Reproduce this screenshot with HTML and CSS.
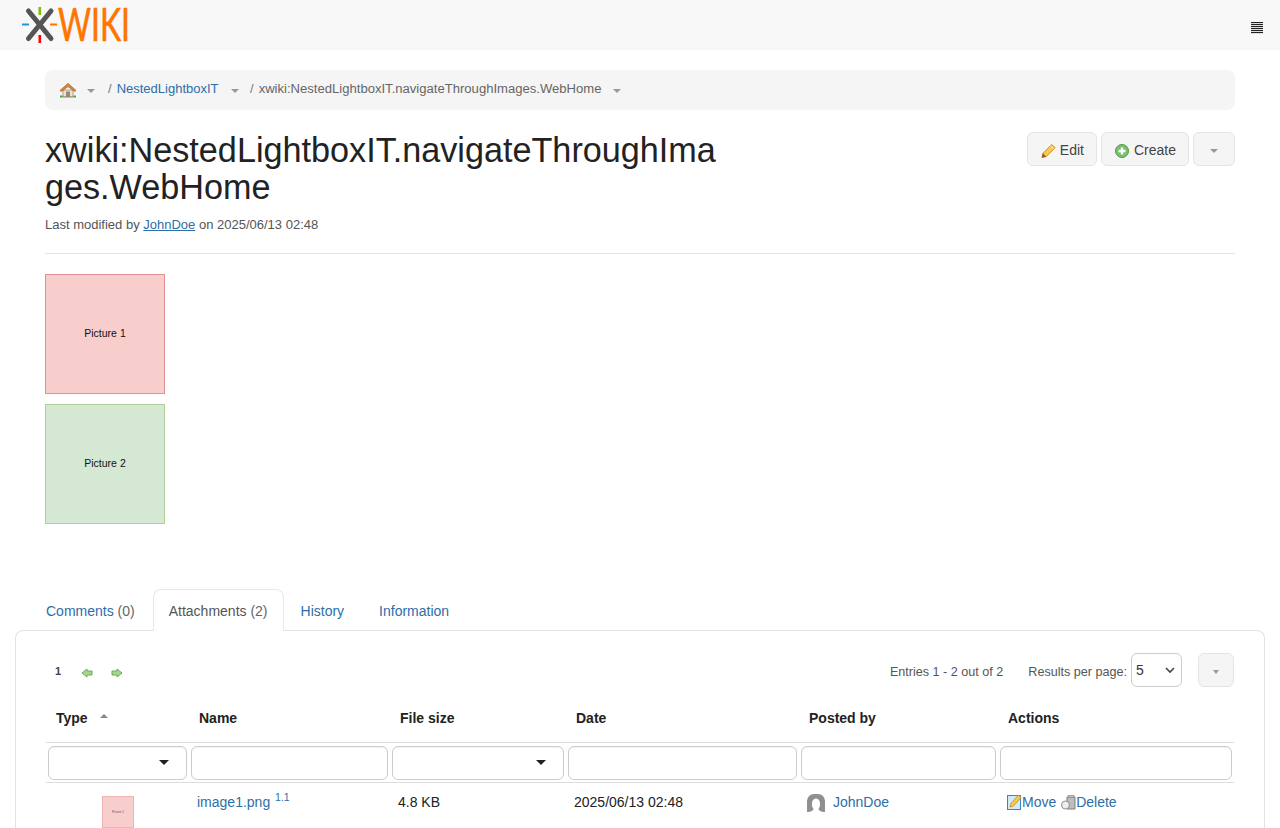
FILE: index.html
```html
<!DOCTYPE html>
<html lang="en">
<head>
<meta charset="utf-8">
<title>xwiki:NestedLightboxIT.navigateThroughImages.WebHome</title>
<link rel="stylesheet" href="styles.css">
</head>
<body>
<header class="topbar">
  <a class="logo" href="#" aria-label="XWiki">
    <svg width="150" height="50" viewBox="0 0 150 50">
      <g stroke="#555" stroke-width="5" stroke-linecap="round">
        <line x1="6.500" y1="11" x2="29" y2="38.500"/>
        <line x1="29" y1="11" x2="6.500" y2="38.500"/>
      </g>
      <line x1="17.800" y1="7" x2="17.800" y2="15" stroke="#84bd00" stroke-width="2.600"/>
      <line x1="17.800" y1="35" x2="17.800" y2="43" stroke="#f00" stroke-width="2.600"/>
      <line x1="0" y1="24.500" x2="7" y2="24.500" stroke="#1c9ad6" stroke-width="2"/>
      <line x1="28" y1="24.500" x2="35" y2="24.500" stroke="#ff7500" stroke-width="2"/>
      <text class="logo-text" x="36" y="41" textLength="72" lengthAdjust="spacingAndGlyphs">WIKI</text>
    </svg>
  </a>
  <button class="menu-toggle" type="button" aria-label="Menu"><span></span></button>
</header>

<main class="page">
  <nav class="breadcrumb">
    <span class="crumb crumb-home">
      <svg class="icon" width="16" height="15" viewBox="0 0 16 15">
        <path d="M0 13.500h16" stroke="#5aa53b" stroke-width="2"/>
        <path d="M3 7h10v6.500H3z" fill="#f1e2c4" stroke="#b5a27e"/>
        <path d="M6 8.500h4V14H6z" fill="#8c8c8c"/>
        <path d="M0 7.500 8 .5l8 7-1.500 .8L8 3.500 1.500 8.300z" fill="#d98a3d" stroke="#a9601f" stroke-width=".8"/>
      </svg>
      <span class="caret"></span>
    </span>
    <span class="crumb crumb-space"><span class="sep">/</span><a href="#">NestedLightboxIT</a><span class="caret"></span></span>
    <span class="crumb crumb-doc"><span class="sep">/</span><span class="current">xwiki:NestedLightboxIT.navigateThroughImages.WebHome</span><span class="caret"></span></span>
  </nav>

  <section class="doc-head">
    <div class="title-block">
      <h1>xwiki:NestedLightboxIT.navigateThroughImages.WebHome</h1>
      <p class="modified">Last modified by <a class="underlined" href="#">JohnDoe</a> on 2025/06/13 02:48</p>
    </div>
    <div class="actions">
      <a class="btn btn-edit" href="#">
        <svg class="icon" width="15" height="16" viewBox="0 0 16 16">
          <path d="M1 15l1-4.500L11.500 1 15 4.500 5.500 14z" fill="#f7c94f" stroke="#c98a1e"/>
          <path d="M1 15l1-4.500L5.500 14z" fill="#8a5a1e"/>
          <path d="M10 2.500 13.500 6" stroke="#fff1b8"/>
        </svg>Edit</a>
      <a class="btn" href="#">
        <svg class="icon" width="14" height="14" viewBox="0 0 14 14">
          <circle cx="7" cy="7" r="6.500" fill="#78c06c" stroke="#4f9a46"/>
          <path d="M7 3.500v7M3.500 7h7" stroke="#fff" stroke-width="2.400"/>
        </svg>Create</a>
      <a class="btn btn-more" href="#" aria-label="More"><span class="caret"></span></a>
    </div>
  </section>

  <hr class="rule">

  <section class="pictures">
    <div class="picture picture-red">Picture 1</div>
    <div class="picture picture-green">Picture 2</div>
  </section>

  <nav class="tabs">
    <a class="tab" href="#">Comments <span class="count">(0)</span></a>
    <a class="tab tab-active" href="#">Attachments <span class="count">(2)</span></a>
    <a class="tab tab-history" href="#">History</a>
    <a class="tab" href="#">Information</a>
  </nav>
</main>

<section class="panel">
  <div class="pager-row">
    <div class="pager">
      <span class="page-no">1</span>
      <svg width="12" height="10" viewBox="0 0 12 10"><path d="M1 5l5-4v2h5v4H6v2z" fill="#a5d58f" stroke="#6fa85a"/></svg>
      <svg width="12" height="10" viewBox="0 0 12 10"><path d="M11 5L6 1v2H1v4h5v2z" fill="#a5d58f" stroke="#6fa85a"/></svg>
    </div>
    <div class="pager-info">
      <span class="entries">Entries 1 - 2 out of 2</span>
      <label class="per-page"><span class="per-page-text">Results per page:</span>
        <span class="select-box">5
          <svg width="12" height="8" viewBox="0 0 12 8"><path d="M2 2l4 4 4-4" fill="none" stroke="#444" stroke-width="1.600"/></svg>
        </span>
      </label>
      <a class="btn btn-mini" href="#" aria-label="Options"><span class="caret caret-small"></span></a>
    </div>
  </div>

  <table class="attachments">
    <colgroup>
      <col class="c-type"><col class="c-name"><col class="c-size"><col class="c-date"><col class="c-author"><col class="c-actions">
    </colgroup>
    <thead>
      <tr class="head-row">
        <th>Type <span class="sort-up"></span></th>
        <th>Name</th>
        <th>File size</th>
        <th>Date</th>
        <th>Posted by</th>
        <th>Actions</th>
      </tr>
      <tr class="filter-row">
        <td><span class="field field-select"><span class="down"></span></span></td>
        <td><span class="field"></span></td>
        <td><span class="field field-select"><span class="down"></span></span></td>
        <td><span class="field"></span></td>
        <td><span class="field"></span></td>
        <td><span class="field"></span></td>
      </tr>
    </thead>
    <tbody>
      <tr class="data-row">
        <td class="thumb-cell"><div class="thumb">Picture 1</div></td>
        <td><a href="#">image1.png</a> <sup><a href="#">1.1</a></sup></td>
        <td>4.8 KB</td>
        <td>2025/06/13 02:48</td>
        <td class="author-cell">
          <svg class="avatar" width="18" height="18" viewBox="0 0 18 18">
            <path d="M0 18V7a7 7 0 0 1 7-7h4a7 7 0 0 1 7 7v11z" fill="#8f8f8f"/>
            <path d="M2 18c2-.5 4-1 4.500-3C5 13 4.800 11 5 9c.3-3 2-4.500 4-4.500s3.700 1.500 4 4.500c.2 2 0 4-1.500 6 .5 2 2.500 2.500 4.500 3z" fill="#fff"/>
          </svg><a href="#">JohnDoe</a>
        </td>
        <td class="action-cell">
          <svg width="15" height="16" viewBox="0 0 15 16">
            <rect x=".5" y="1.500" width="13" height="14" fill="#d3e8f8" stroke="#3b83c4"/>
            <path d="M3 13l1-3.500L11.500 1 14 3.500 6.500 12z" fill="#f7c94f" stroke="#c98a1e" stroke-width=".8"/>
          </svg><a href="#">Move</a>
          <svg class="del-icon" width="15" height="16" viewBox="0 0 15 16">
            <path d="M6 3h8v12H6z" fill="#bdbdbd" stroke="#7d7d7d"/>
            <path d="M7 1.500h6V3H7z" fill="#e6e6e6" stroke="#8d8d8d" stroke-width=".8"/>
            <circle cx="4.500" cy="11" r="4" fill="#ededed" stroke="#8d8d8d"/>
          </svg><a href="#">Delete</a>
        </td>
      </tr>
    </tbody>
  </table>
</section>
</body>
</html>
```
FILE: styles.css
```css
* { box-sizing: border-box; }
html { height: 828px; overflow: hidden; }
body {
  margin: 0;
  font-family: "Liberation Sans", Arial, sans-serif;
  font-size: 14px;
  line-height: 20px;
  color: #222;
  background: #fff;
}
a { color: #2e6ea8; text-decoration: none; }
.underlined { text-decoration: underline; }

/* top bar */
.topbar {
  height: 50px;
  background: #f8f8f8;
  display: flex;
  justify-content: space-between;
  padding: 0 17px 0 22px;
}
.logo { display: block; height: 50px; }
.logo svg { display: block; }
.logo-text {
  font-family: Lato, "Liberation Sans", sans-serif;
  font-size: 46px;
  fill: #ff7500;
  stroke: #ff7500;
  stroke-width: .6px;
}
.menu-toggle {
  border: 0;
  padding: 0;
  background: none;
  width: 12px;
  height: 50px;
  display: flex;
  align-items: center;
}
.menu-toggle span {
  display: block;
  width: 12px;
  height: 12px;
  margin-top: 6px;
  background: repeating-linear-gradient(to bottom, #222 0, #222 1px, #ddd 1px, #ddd 2px);
}

/* page */
.page { padding: 20px 45px 0; }
.breadcrumb {
  height: 40px;
  background: #f5f5f5;
  border-radius: 8px;
  display: flex;
  align-items: center;
  padding-left: 15px;
  font-size: 13px;
}
.crumb { display: flex; align-items: center; margin-top: -2px; }
.crumb-home { width: 48px; margin-top: 0; }
.crumb-space { width: 142px; }
.sep { color: #777; margin-right: 5px; }
.current { color: #666; font-size: 13.080px; }
.crumb-space a { width: 114px; }
.crumb-space .caret { margin-left: 0; margin-top: 4px; }
.crumb-doc .caret { margin-left: 11px; margin-top: 4px; }
.icon { flex: none; }
.caret {
  display: inline-block;
  width: 0;
  height: 0;
  margin-left: 11px;
  margin-top: 2px;
  border-left: 4px solid transparent;
  border-right: 4px solid transparent;
  border-top: 4px solid #999;
}

.doc-head {
  display: flex;
  justify-content: space-between;
  padding-top: 22px;
}
.title-block { width: 675px; }
h1 {
  margin: 0;
  font-size: 34.200px;
  font-weight: 400;
  line-height: 37px;
  color: #222;
  word-break: break-all;
}
.modified {
  margin: 10px 0 0;
  font-size: 13px;
  line-height: 18px;
  color: #555;
}
.actions { display: flex; gap: 4px; height: 34px; }
.btn {
  display: flex;
  align-items: center;
  gap: 5px;
  height: 34px;
  padding: 1px 12px 0 13px;
  background: #f5f5f5;
  border: 1px solid #e4e4e4;
  border-radius: 6px;
  color: #444;
}
.btn-edit { gap: 4px; }
.btn .icon { margin-top: 2px; }
.btn-more { width: 42px; justify-content: center; padding: 0; }
.btn-more .caret { margin: 3px 0 0; }
.rule { border: 0; border-top: 1px solid #e5e5e5; margin: 19px 0 20px; }

.pictures { display: flex; flex-direction: column; gap: 10px; }
.picture {
  width: 120px;
  height: 120px;
  display: flex;
  align-items: center;
  justify-content: center;
  padding-bottom: 2px;
  font-size: 10.500px;
  color: #111;
  border: 1px solid;
}
.picture-red { background: #f8cecc; border-color: #df9291; }
.picture-green { background: #d5e8d4; border-color: #aed09c; }

.tabs { display: flex; margin: 65px 0 0; height: 42px; align-items: stretch; }
.tab { padding: 11px 16px 0; border: 1px solid transparent; line-height: 20px; }
.tab:first-child { padding-left: 0; padding-right: 17px; }
.tab-history { padding-right: 17px; }
.tab-active {
  color: #555;
  background: #fff;
  border-color: #e8e8e8;
  border-bottom-color: #fff;
  border-radius: 8px 8px 0 0;
  height: 42px;
  position: relative;
  z-index: 1;
  padding: 11px 15px 0;
}
.count { color: #666; }

/* panel */
.panel {
  margin: -1px 15px 0;
  height: 260px;
  border: 1px solid #e3e3e3;
  border-bottom: 0;
  border-radius: 8px 8px 0 0;
  padding: 22px 30px 0;
}
.pager-row { display: flex; justify-content: space-between; height: 34px; }
.pager { display: flex; align-items: center; padding-left: 9px; }
.page-no { font-size: 11px; font-weight: 700; color: #444; width: 26px; margin-top: 2px; }
.pager svg { margin-right: 18px; margin-top: 6px; }
.pager-info { display: flex; align-items: center; font-size: 12.600px; color: #555; }
.entries { margin-right: 25px; margin-top: 3px; }
.per-page { display: flex; align-items: center; gap: 4px; }
.per-page-text { margin-top: 3px; }
.select-box {
  display: flex;
  align-items: center;
  justify-content: space-between;
  width: 51px;
  height: 34px;
  padding: 0 5px 0 4px;
  border: 1px solid #ccc;
  border-radius: 6px;
  font-size: 14px;
  color: #333;
}
.btn-mini { width: 36px; height: 34px; margin-left: 16px; justify-content: center; padding: 0; }
.caret-small { margin: 3px 0 0; border-left-width: 3px; border-right-width: 3px; border-top-width: 4px; }

.attachments { table-layout: fixed; border-collapse: collapse; width: 1188px; margin-top: 14px; }
.c-type { width: 143px; }
.c-name { width: 201px; }
.c-size { width: 176px; }
.c-date { width: 233px; }
.c-author { width: 199px; }
.c-actions { width: 236px; }
.head-row th {
  height: 41px;
  padding: 0 10px 6px;
  text-align: left;
  font-weight: 700;
  color: #222;
  border-bottom: 1px solid #ddd;
  vertical-align: middle;
}
.sort-up {
  display: inline-block;
  width: 0;
  height: 0;
  margin: 0 0 5px 8px;
  border-left: 4px solid transparent;
  border-right: 4px solid transparent;
  border-bottom: 4px solid #888;
}
.filter-row td { padding: 3px 2px 2px; height: 40px; border-bottom: 1px solid #ddd; }
.field {
  display: flex;
  align-items: center;
  justify-content: flex-end;
  height: 34px;
  background: #fff;
  border: 1px solid #ccc;
  border-radius: 6px;
  padding-right: 17px;
  box-shadow: inset 0 1px 1px rgba(0, 0, 0, .05);
}
.down {
  width: 0;
  height: 0;
  border-left: 5px solid transparent;
  border-right: 5px solid transparent;
  border-top: 5px solid #222;
}
.data-row td { padding: 9px 8px 0; vertical-align: top; height: 45px; }
.data-row sup { font-size: 10.500px; line-height: 0; margin-left: 1px; }
.data-row .thumb-cell { padding: 13px 0 0 56px; }
.thumb {
  width: 32px;
  height: 32px;
  background: #f8cecc;
  border: 1px solid #efb3b1;
  font-size: 3px;
  line-height: 30px;
  text-align: center;
  color: #555;
}
.author-cell { white-space: nowrap; }
.avatar { vertical-align: -5px; margin-right: 8px; }
.data-row .action-cell { white-space: nowrap; padding-left: 9px; }
.action-cell svg { vertical-align: -3px; }
.del-icon { margin-left: 1px; }
```
